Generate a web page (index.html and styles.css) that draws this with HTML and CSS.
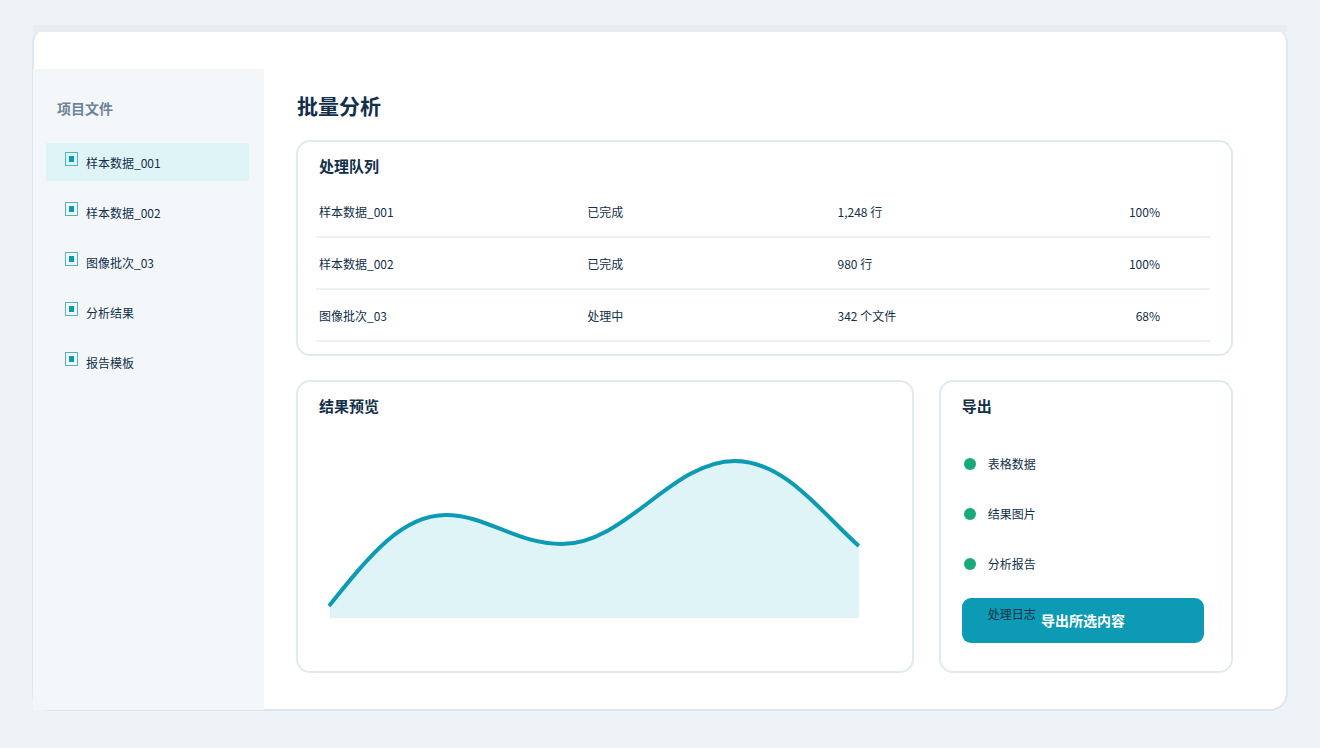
FILE: index.html
```html
<!DOCTYPE html>
<html lang="zh-CN">
<head>
    <meta charset="UTF-8">
    <meta name="viewport" content="width=device-width, initial-scale=1.0">
    <title>批量分析</title>
    <link rel="stylesheet" href="styles.css">
</head>
<body>
    <div class="window">
        <header class="titlebar"></header>
        <div class="workspace">
            <aside class="sidebar">
                <h2 class="sidebar-title">项目文件</h2>
                <nav class="file-list">
                    <a href="#" class="file active"><span class="file-icon"></span>样本数据_001</a>
                    <a href="#" class="file"><span class="file-icon"></span>样本数据_002</a>
                    <a href="#" class="file"><span class="file-icon"></span>图像批次_03</a>
                    <a href="#" class="file"><span class="file-icon"></span>分析结果</a>
                    <a href="#" class="file"><span class="file-icon"></span>报告模板</a>
                </nav>
            </aside>

            <main class="content">
                <h1>批量分析</h1>

                <section class="card queue">
                    <h2 class="card-title">处理队列</h2>
                    <table class="queue-table">
                        <tbody>
                            <tr>
                                <td class="col-name">样本数据_001</td>
                                <td class="col-status">已完成</td>
                                <td>1,248 行</td>
                                <td class="col-progress">100%</td>
                            </tr>
                            <tr>
                                <td class="col-name">样本数据_002</td>
                                <td class="col-status">已完成</td>
                                <td>980 行</td>
                                <td class="col-progress">100%</td>
                            </tr>
                            <tr>
                                <td class="col-name">图像批次_03</td>
                                <td class="col-status">处理中</td>
                                <td>342 个文件</td>
                                <td class="col-progress">68%</td>
                            </tr>
                        </tbody>
                    </table>
                </section>

                <div class="bottom-row">
                    <section class="card preview">
                        <h2 class="card-title">结果预览</h2>
                        <svg class="chart" viewBox="0 0 572 190" role="img" aria-label="结果预览">
                            <path class="chart-area" d="M11 165C51 115 83 75 127 75C167 75 197 104 243 104C307 104 353 21 416 21C466 21 503 73 540 105.500V178H11Z"/>
                            <path class="chart-line" d="M10 166C51 115 83 75 127 75C167 75 197 104 243 104C307 104 353 21 416 21C466 21 503 73 540 106"/>
                        </svg>
                    </section>

                    <section class="card export">
                        <h2 class="card-title">导出</h2>
                        <ul class="export-list">
                            <li><span class="dot"></span><span class="export-name">表格数据</span></li>
                            <li><span class="dot"></span><span class="export-name">结果图片</span></li>
                            <li><span class="dot"></span><span class="export-name">分析报告</span></li>
                            <li><span class="dot"></span><span class="export-name">处理日志</span></li>
                        </ul>
                        <button type="button" class="export-button">导出所选内容</button>
                    </section>
                </div>
            </main>
        </div>
    </div>
</body>
</html>
```
FILE: styles.css
```css
/* Global Styling */
* {
    margin: 0;
    padding: 0;
    box-sizing: border-box;
}
body {
    font-family: "Noto Sans CJK SC", sans-serif;
    font-size: 12px;
    line-height: 20px;
    background-color: #eef3f7;
    color: #12304a;
    display: flex;
    min-height: 100vh;
    padding: 25px 32px 37px;
}

/* Window */
.window {
    flex: 1;
    display: flex;
    flex-direction: column;
    background-color: #fff;
    border: 2px solid #dce8ee;
    border-radius: 18px;
}
.titlebar {
    height: 7px;
    margin: -2px -1px 37px;
    background-color: #e6eef2;
}
.workspace {
    flex: 1;
    display: flex;
}

/* Sidebar */
.sidebar {
    width: 231px;
    flex-shrink: 0;
    margin: 0 0 -1px -1px;
    padding: 29px 15px 30px 13px;
    background-color: #f3f7fa;
}
.sidebar-title {
    font-size: 14px;
    font-weight: 700;
    color: #6f8396;
    padding-left: 11px;
    margin-bottom: 25px;
}
.file-list {
    display: flex;
    flex-direction: column;
    gap: 12px;
}
.file {
    display: flex;
    align-items: center;
    gap: 8px;
    height: 38px;
    padding-top: 2px;
    padding-left: 19px;
    color: #12304a;
    text-decoration: none;
}
.file.active {
    background-color: #dff4f6;
}
.file-icon {
    display: flex;
    align-items: center;
    justify-content: center;
    width: 13px;
    height: 14px;
    margin-bottom: 8px;
    border: 1px solid #4fb5c5;
}
.file-icon::before {
    content: "";
    width: 5px;
    height: 6px;
    background-color: #0d9ab4;
}

/* Content */
.content {
    flex: 1;
    display: flex;
    flex-direction: column;
    min-width: 0;
    padding: 22px 53px 36px 32px;
}
h1 {
    font-size: 21px;
    line-height: 28px;
    font-weight: 700;
    padding-left: 1px;
    margin-bottom: 21px;
}
.card {
    border: 2px solid #e0ebf0;
    border-radius: 14px;
    padding: 14px 21px 12px;
}
.card-title {
    font-size: 15px;
    font-weight: 700;
}

/* Queue */
.queue {
    padding-left: 18px;
    margin-bottom: 24px;
}
.queue .card-title {
    padding-left: 3px;
    margin-bottom: 10px;
}
.queue-table {
    width: 100%;
    table-layout: fixed;
    border-collapse: separate;
    border-spacing: 0;
}
.queue-table td {
    height: 52px;
    padding-top: 2px;
    padding-left: 3px;
    border-bottom: 2px solid #ebf1f6;
}
.col-name {
    width: 30%;
}
.col-status {
    width: 28%;
}
.queue-table .col-progress {
    padding-right: 50px;
    text-align: right;
}

/* Preview and export */
.bottom-row {
    flex: 1;
    display: grid;
    grid-template-columns: 21fr 10fr;
    gap: 25px;
}
.chart {
    display: block;
    width: 100%;
    margin-top: 24px;
}
.chart-area {
    fill: #dff4f7;
}
.chart-line {
    fill: none;
    stroke: #0d9ab4;
    stroke-width: 4;
}
.export {
    padding-right: 27px;
    padding-bottom: 28px;
}
.export-list {
    list-style: none;
    margin-top: 23px;
}
.export-list li {
    display: flex;
    align-items: center;
    gap: 12px;
    height: 50px;
    padding-left: 2px;
}
.dot {
    width: 12px;
    height: 12px;
    border-radius: 50%;
    background-color: #19aa7b;
}
.export-name {
    position: relative;
    z-index: 2;
}
/* the button slides under the last label */
.export-button {
    position: relative;
    z-index: 1;
    display: block;
    width: 100%;
    height: 45px;
    margin-top: -41px;
    padding-bottom: 2px;
    border: none;
    border-radius: 9px;
    background-color: #0d9ab4;
    color: #fff;
    font-family: inherit;
    font-size: 14px;
    font-weight: 700;
    cursor: pointer;
}
```
